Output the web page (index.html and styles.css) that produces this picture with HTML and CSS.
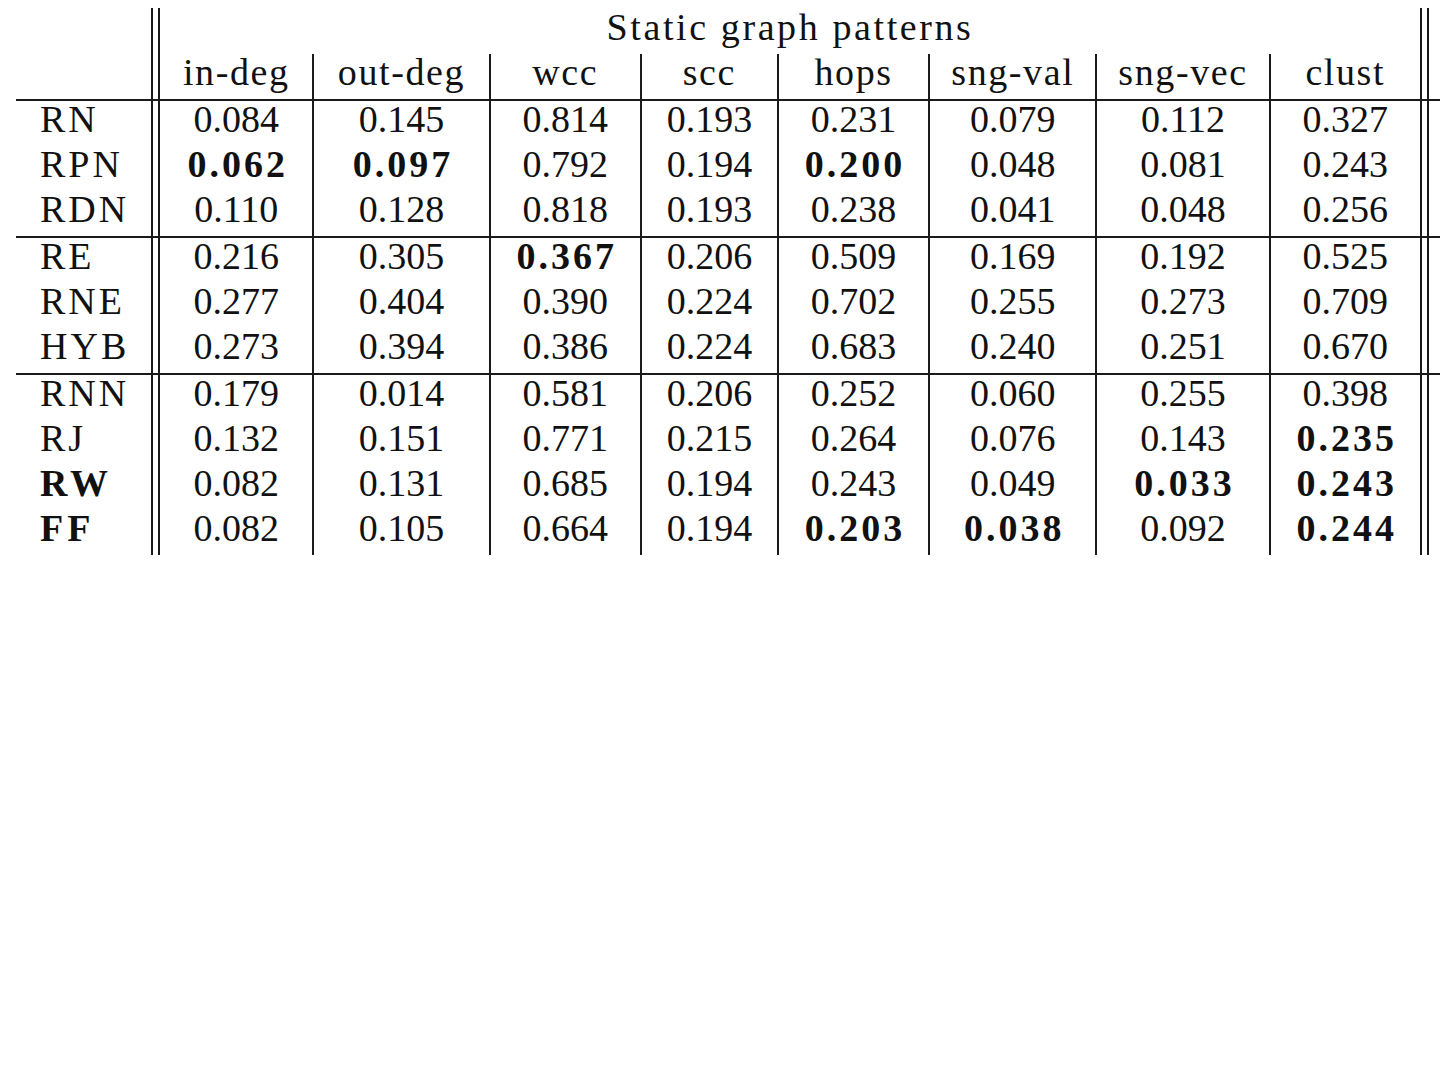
FILE: index.html
```html
<!DOCTYPE html>
<html lang="en">
<head>
  <meta name="viewport" content="width=device-width, initial-scale=1.0">
  <title>Static graph patterns</title>
  <link rel="stylesheet" href="styles.css">
</head>
<body>

  <table class="results">
    <colgroup>
      <col class="c-label">
      <col class="c-gap">
      <col class="c-indeg">
      <col class="c-outdeg">
      <col class="c-wcc">
      <col class="c-scc">
      <col class="c-hops">
      <col class="c-sngval">
      <col class="c-sngvec">
      <col class="c-clust">
      <col class="c-gap">
      <col class="c-more">
    </colgroup>
    <thead>
      <tr class="group-row">
        <th></th>
        <th class="gap"></th>
        <th colspan="8" class="group-title">Static graph patterns</th>
        <th class="gap"></th>
        <th></th>
      </tr>
      <tr class="head-row">
        <th></th>
        <th class="gap"></th>
        <th class="v">in-deg</th>
        <th class="v">out-deg</th>
        <th class="v">wcc</th>
        <th class="v">scc</th>
        <th class="v">hops</th>
        <th class="v">sng-val</th>
        <th class="v">sng-vec</th>
        <th>clust</th>
        <th class="gap"></th>
        <th></th>
      </tr>
    </thead>
    <tbody>
      <tr>
        <td class="name">RN</td><td class="gap"></td>
        <td class="v">0.084</td><td class="v">0.145</td><td class="v">0.814</td><td class="v">0.193</td>
        <td class="v">0.231</td><td class="v">0.079</td><td class="v">0.112</td><td>0.327</td>
        <td class="gap"></td><td></td>
      </tr>
      <tr>
        <td class="name">RPN</td><td class="gap"></td>
        <td class="v"><b>0.062</b></td><td class="v"><b>0.097</b></td><td class="v">0.792</td><td class="v">0.194</td>
        <td class="v"><b>0.200</b></td><td class="v">0.048</td><td class="v">0.081</td><td>0.243</td>
        <td class="gap"></td><td></td>
      </tr>
      <tr class="end">
        <td class="name">RDN</td><td class="gap"></td>
        <td class="v">0.110</td><td class="v">0.128</td><td class="v">0.818</td><td class="v">0.193</td>
        <td class="v">0.238</td><td class="v">0.041</td><td class="v">0.048</td><td>0.256</td>
        <td class="gap"></td><td></td>
      </tr>
      <tr>
        <td class="name">RE</td><td class="gap"></td>
        <td class="v">0.216</td><td class="v">0.305</td><td class="v"><b>0.367</b></td><td class="v">0.206</td>
        <td class="v">0.509</td><td class="v">0.169</td><td class="v">0.192</td><td>0.525</td>
        <td class="gap"></td><td></td>
      </tr>
      <tr>
        <td class="name">RNE</td><td class="gap"></td>
        <td class="v">0.277</td><td class="v">0.404</td><td class="v">0.390</td><td class="v">0.224</td>
        <td class="v">0.702</td><td class="v">0.255</td><td class="v">0.273</td><td>0.709</td>
        <td class="gap"></td><td></td>
      </tr>
      <tr class="end">
        <td class="name">HYB</td><td class="gap"></td>
        <td class="v">0.273</td><td class="v">0.394</td><td class="v">0.386</td><td class="v">0.224</td>
        <td class="v">0.683</td><td class="v">0.240</td><td class="v">0.251</td><td>0.670</td>
        <td class="gap"></td><td></td>
      </tr>
      <tr>
        <td class="name">RNN</td><td class="gap"></td>
        <td class="v">0.179</td><td class="v">0.014</td><td class="v">0.581</td><td class="v">0.206</td>
        <td class="v">0.252</td><td class="v">0.060</td><td class="v">0.255</td><td>0.398</td>
        <td class="gap"></td><td></td>
      </tr>
      <tr>
        <td class="name">RJ</td><td class="gap"></td>
        <td class="v">0.132</td><td class="v">0.151</td><td class="v">0.771</td><td class="v">0.215</td>
        <td class="v">0.264</td><td class="v">0.076</td><td class="v">0.143</td><td><b>0.235</b></td>
        <td class="gap"></td><td></td>
      </tr>
      <tr>
        <td class="name"><b>RW</b></td><td class="gap"></td>
        <td class="v">0.082</td><td class="v">0.131</td><td class="v">0.685</td><td class="v">0.194</td>
        <td class="v">0.243</td><td class="v">0.049</td><td class="v"><b>0.033</b></td><td><b>0.243</b></td>
        <td class="gap"></td><td></td>
      </tr>
      <tr>
        <td class="name"><b>FF</b></td><td class="gap"></td>
        <td class="v">0.082</td><td class="v">0.105</td><td class="v">0.664</td><td class="v">0.194</td>
        <td class="v"><b>0.203</b></td><td class="v"><b>0.038</b></td><td class="v">0.092</td><td><b>0.244</b></td>
        <td class="gap"></td><td></td>
      </tr>
    </tbody>
  </table>

</body>
</html>
```

FILE: styles.css
```css
html, body {
  margin: 0;
  padding: 0;
  background: #ffffff;
}

body {
  padding: 8px 0 0 16px;
  font-family: 'Liberation Serif', 'Times New Roman', serif;
  color: #111;
}

.results {
  border-collapse: collapse;
  table-layout: fixed;
  width: 1424px;
  font-size: 38px;
  line-height: 36px;
}

.c-label { width: 136px; }
.c-gap { width: 7px; }
.c-indeg { width: 154px; }
.c-outdeg { width: 176px; }
.c-wcc { width: 151px; }
.c-scc { width: 137px; }
.c-hops { width: 151px; }
.c-sngval { width: 167px; }
.c-sngvec { width: 173px; }
.c-clust { width: 151px; }
.c-more { width: 12px; }

.results th,
.results td {
  padding: 0;
  text-align: center;
  font-weight: normal;
  white-space: nowrap;
  vertical-align: middle;
}

/* wider bold figures, closer to the extended bold of the original */
.results b {
  font-weight: bold;
  letter-spacing: 3px;
  margin-right: -3px;
}

.group-row th {
  padding: 1px 0 9px;
}

.group-title {
  letter-spacing: 2.6px;
}

.head-row th {
  padding-bottom: 9px;
  letter-spacing: 1.6px;
  border-bottom: 2px solid #1a1a1a;
}

.results td {
  padding-bottom: 9px;
}

.results td.name {
  text-align: left;
  padding-left: 24px;
  letter-spacing: 3px;
}

.results td.name b {
  letter-spacing: 4px;
}

.results .v {
  border-right: 2px solid #1a1a1a;
}

.results .gap {
  border-left: 2px solid #1a1a1a;
  border-right: 2px solid #1a1a1a;
}

.results tr.end td {
  border-bottom: 2px solid #1a1a1a;
}
```
